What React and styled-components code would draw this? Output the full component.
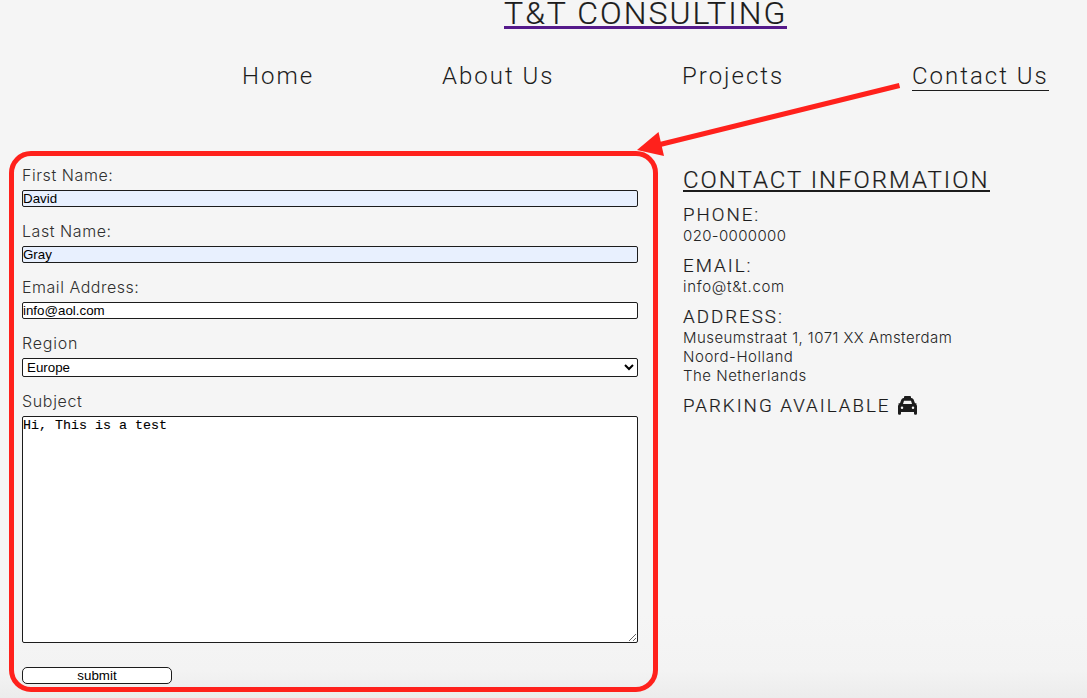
import React from 'react';
import styled, { createGlobalStyle } from 'styled-components';

const GlobalStyle = createGlobalStyle`
  * { box-sizing: border-box; }
  html, body { margin: 0; height: 100%; overflow: hidden; }
  body {
    background: linear-gradient(#f5f5f5 0, #f5f5f5 88%, #f3f3f3 96%, #ececec 100%);
    color: #1c1c1c;
  }
`;

const Page = styled.div`
  position: relative;
  width: 1087px;
  height: 698px;
  overflow: hidden;
  font-family: Roboto, sans-serif;
  font-weight: 300;
`;

const Header = styled.header`
  height: 151px;
`;

const Title = styled.h1`
  margin: 0 0 0 504px;
  height: 60px;
  font-size: 32px;
  font-weight: 300;
  line-height: 26px;
  letter-spacing: 2.02px;
  white-space: nowrap;
  -webkit-text-stroke: 0.2px #1c1c1c;
  a {
    display: inline-block;
    height: 29px;
    color: #1c1c1c;
    border-bottom: 3px solid #551a8b;
    text-decoration: none;
  }
`;

const Nav = styled.nav`
  display: grid;
  grid-template-columns: 200px 240px 230px auto;
  justify-content: start;
  padding-left: 242px;
`;

const NavLink = styled.a`
  justify-self: start;
  height: 31px;
  font-size: 24px;
  line-height: 33px;
  letter-spacing: 2px;
  white-space: nowrap;
  border-bottom: ${(p) => (p.$active ? '1px solid #1c1c1c' : '0')};
`;

const Main = styled.main`
  display: grid;
  grid-template-columns: 616px 1fr;
  column-gap: 45px;
  padding: 15px 22px 0;
`;

const Form = styled.form`
  display: flex;
  flex-direction: column;
  gap: 15px;
`;

const Field = styled.div`
  display: flex;
  flex-direction: column;
  gap: 5px;
`;

const Label = styled.label`
  font: 300 16px/19px Inter, sans-serif;
  letter-spacing: ${(p) => p.$track || 0}px;
  color: #303030;
`;

const Input = styled.input`
  height: 17px;
  padding: 0;
  border: 1px solid #1c1c1c;
  border-radius: 2px;
  background: ${(p) => (p.$filled ? '#e8f0fe' : '#fff')};
  color: #000;
  font: 13.33px 'Liberation Sans', sans-serif;
  outline: 0;
`;

const Select = styled.select`
  height: 19px;
  padding: 0;
  border: 1px solid #1c1c1c;
  border-radius: 2px;
  background: #fff;
  color: #000;
  font: 13.33px 'Liberation Sans', sans-serif;
`;

const TextArea = styled.textarea`
  height: 227px;
  padding: 1px 0;
  border: 1px solid #1c1c1c;
  border-radius: 2px;
  background: #fff;
  color: #000;
  font: 13.33px/15px 'Liberation Mono', monospace;
  -webkit-text-stroke: 0.12px #000;
  outline: 0;
`;

const Submit = styled.button`
  width: 150px;
  height: 17px;
  margin-top: 9px;
  padding: 0;
  border: 1px solid #1c1c1c;
  border-radius: 5px;
  background: #fff;
  color: #000;
  font: 13.33px/15px 'Liberation Sans', sans-serif;
`;

const Contact = styled.aside`
  display: flex;
  flex-direction: column;
  align-items: flex-start;
  white-space: nowrap;
`;

const ContactTitle = styled.h2`
  margin: 0 0 11px;
  height: 26px;
  border-bottom: 2px solid #1c1c1c;
  font-size: 24px;
  font-weight: 300;
  line-height: 28px;
  letter-spacing: 1.99px;
  -webkit-text-stroke: 0.2px #1c1c1c;
`;

const Block = styled.section`
  margin-bottom: 9px;
`;

const BlockTitle = styled.h3`
  display: flex;
  align-items: flex-start;
  gap: 8px;
  margin: 0;
  height: 23px;
  font-size: 18.72px;
  font-weight: 300;
  line-height: 24px;
  letter-spacing: 2px;
  -webkit-text-stroke: 0.2px #1c1c1c;
`;

const Line = styled.p`
  margin: 0;
  font: 300 15px/19px Inter, sans-serif;
  letter-spacing: ${(p) => p.$track || 0}px;
  color: #252525;
`;

const Frame = styled.div`
  position: absolute;
  left: 9px;
  top: 151px;
  width: 649px;
  height: 541px;
  border: 5px solid #ff211c;
  border-radius: 22px;
  pointer-events: none;
`;

const Arrow = styled.svg`
  position: absolute;
  left: 630px;
  top: 76px;
  pointer-events: none;
`;

const TaxiSvg = styled.svg`
  margin-top: 2px;
`;

const TaxiIcon = () => (
  <TaxiSvg width="19" height="19" viewBox="0 0 19 19" fill="#1c1c1c" stroke="none">
    <path
      fillRule="evenodd"
      d="M7 0H12Q13 0 13 1V2H13.400Q15 2 15.600 3.500L17 7.300H18Q18.700 7.300 18.600 8L18.300 8.800Q19 9.300 19 10.200V17.600Q19 18.800 17.800 18.800H17.200Q16 18.800 16 17.600V16H3V17.600Q3 18.800 1.800 18.800H1.200Q0 18.800 0 17.600V10.200Q0 9.300 .7 8.800L.4 8Q.3 7.300 1 7.300H2L3.400 3.500Q4 2 5.600 2H6V1Q6 0 7 0ZM6 4.800L5 8H14L13 4.800ZM4 10.500A1.250 1.250 0 1 0 4 13A1.250 1.250 0 1 0 4 10.500ZM15 10.500A1.250 1.250 0 1 0 15 13A1.250 1.250 0 1 0 15 10.500Z"
    />
  </TaxiSvg>
);

export default function App() {
  return (
    <Page>
      <GlobalStyle />
      <Header>
        <Title><a>T&amp;T CONSULTING</a></Title>
        <Nav>
          <NavLink>Home</NavLink>
          <NavLink>About Us</NavLink>
          <NavLink>Projects</NavLink>
          <NavLink $active>Contact Us</NavLink>
        </Nav>
      </Header>
      <Main>
        <Form>
          <Field>
            <Label $track={0.57}>First Name:</Label>
            <Input $filled defaultValue="David" />
          </Field>
          <Field>
            <Label $track={0.55}>Last Name:</Label>
            <Input $filled defaultValue="Gray" />
          </Field>
          <Field>
            <Label $track={0.53}>Email Address:</Label>
            <Input defaultValue="info@aol.com" />
          </Field>
          <Field>
            <Label $track={0.8}>Region</Label>
            <Select defaultValue="Europe"><option>Europe</option></Select>
          </Field>
          <Field>
            <Label $track={0.66}>Subject</Label>
            <TextArea spellCheck={false} defaultValue="Hi, This is a test" />
          </Field>
          <Submit type="button">submit</Submit>
        </Form>
        <Contact>
          <ContactTitle>CONTACT INFORMATION</ContactTitle>
          <Block>
            <BlockTitle>PHONE:</BlockTitle>
            <Line $track={0.36}>020-0000000</Line>
          </Block>
          <Block>
            <BlockTitle>EMAIL:</BlockTitle>
            <Line $track={0.7}>info@t&amp;t.com</Line>
          </Block>
          <Block>
            <BlockTitle>ADDRESS:</BlockTitle>
            <Line $track={0.44}>Museumstraat 1, 1071 XX Amsterdam</Line>
            <Line $track={0.55}>Noord-Holland</Line>
            <Line $track={0.5}>The Netherlands</Line>
          </Block>
          <BlockTitle>PARKING AVAILABLE <TaxiIcon /></BlockTitle>
        </Contact>
      </Main>
      <Frame />
      <Arrow width="280" height="84" viewBox="630 76 280 84">
        <path d="M899.5 85.5L658 145" stroke="#ff211c" strokeWidth="5" />
        <path d="M637 150L658.5 132L664 156Z" fill="#ff211c" />
      </Arrow>
    </Page>
  );
}
